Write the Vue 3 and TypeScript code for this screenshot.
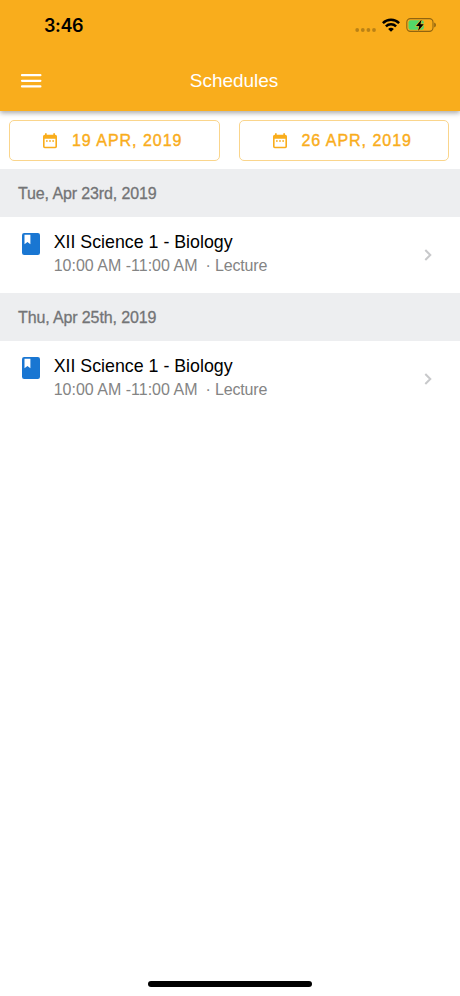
<script setup lang="ts">
interface Lecture {
  day: string
  title: string
  time: string
  kind: string
}

const range: string[] = ['19 APR, 2019', '26 APR, 2019']
const lectures: Lecture[] = [
  { day: 'Tue, Apr 23rd, 2019', title: 'XII Science 1 - Biology', time: '10:00 AM -11:00 AM', kind: 'Lecture' },
  { day: 'Thu, Apr 25th, 2019', title: 'XII Science 1 - Biology', time: '10:00 AM -11:00 AM', kind: 'Lecture' },
]
</script>

<template>
  <div class="screen">
    <header class="header">
      <div class="status">
        <span class="clock">3:46</span>
        <div class="indicators">
          <svg class="signal" width="22" height="4" viewBox="0 0 22 4">
            <circle v-for="n in 4" :key="n" :cx="n * 5.6 - 3.4" cy="2" r="1.9" fill="#000" fill-opacity=".25" />
          </svg>
          <svg class="wifi" width="18" height="14" viewBox="0 0 18 14">
            <g fill="none" stroke="#000" stroke-width="2.5">
              <path d="M.9 5.1a11.6 11.6 0 0 1 16.2 0" />
              <path d="M3.9 8.3a7.3 7.3 0 0 1 10.2 0" />
            </g>
            <path d="M6.1 11a4.3 4.3 0 0 1 5.8 0L9 13.8z" />
          </svg>
          <svg class="battery" width="31" height="16" viewBox="0 0 31 16">
            <rect x=".8" y="1.6" width="26.2" height="12.8" rx="3.6" fill="none" stroke="#000" stroke-opacity=".42" stroke-width="1.1" />
            <rect x="2.5" y="3.3" width="15.3" height="9.4" rx="2" fill="#52d769" />
            <path d="M28.2 5.5q1.8.8 1.8 2.5t-1.8 2.5z" fill-opacity=".42" />
            <path d="M15.6 2.4 10 8.9h3.3l-1.2 5 5.6-6.7h-3.3z" stroke="#f9ad1c" stroke-width="1.2" paint-order="stroke" />
          </svg>
        </div>
      </div>
      <div class="toolbar">
        <svg class="menu" width="22" height="16" viewBox="0 0 22 16">
          <path d="M2 2.2h18.4M2 7.8h18.4M2 13.4h18.4" stroke="#fff" stroke-width="2.2" stroke-linecap="round" />
        </svg>
        <h1 class="heading">Schedules</h1>
      </div>
    </header>

    <div class="range">
      <button v-for="date in range" :key="date" class="date" type="button">
        <svg class="calendar" width="14" height="16" viewBox="0 0 14 16">
          <path
            fill="#f9ad1c"
            fill-rule="evenodd"
            d="M2 .3h1.7v1.5h6.6V.3H12v1.5h.3A1.7 1.7 0 0 1 14 3.5v10.1a1.7 1.7 0 0 1-1.7 1.7H1.7A1.7 1.7 0 0 1 0 13.6V3.5A1.7 1.7 0 0 1 1.7 1.8H2zM1.6 5.7v7.5q0 .6.6.6h9.6q.6 0 .6-.6V5.7z"
          />
          <path d="M3 8h1.7M6.15 8h1.7M9.3 8H11" stroke="#f9ad1c" stroke-width="1.4" />
        </svg>
        <span>{{ date }}</span>
      </button>
    </div>

    <section v-for="item in lectures" :key="item.day">
      <h2 class="day">{{ item.day }}</h2>
      <div class="item">
        <svg class="book" width="18" height="22" viewBox="0 0 18 22">
          <rect width="18" height="22" rx="2.2" fill="#1976d2" />
          <path d="M2.5 1.8h5.9v9.4L5.45 9 2.5 11.2z" fill="#fff" />
        </svg>
        <div class="details">
          <div class="title">{{ item.title }}</div>
          <div class="meta"><span>{{ item.time }}</span><span class="kind">· {{ item.kind }}</span></div>
        </div>
        <svg class="chevron" width="8" height="12" viewBox="0 0 8 12">
          <path d="m1.3 1 5 5-5 5" fill="none" stroke="#c8c9cb" stroke-width="2" />
        </svg>
      </div>
    </section>
    <div class="home"></div>
  </div>
</template>

<style>
body {
  margin: 0;
  background: #fff;
}
</style>

<style scoped>
.screen {
  box-sizing: border-box;
  display: flex;
  flex-direction: column;
  width: 460px;
  height: 996px;
  overflow: hidden;
  background: #fff;
  font-family: 'Liberation Sans', Arial, sans-serif;
}
.header {
  height: 111px;
  flex: none;
  background: #f9ad1c;
  box-shadow: 0 2px 5px rgba(0, 0, 0, 0.35);
}
.status {
  display: flex;
  justify-content: space-between;
  align-items: center;
  height: 50px;
  padding: 0 23px 0 44px;
}
.clock {
  font: 600 18px/22px Inter, sans-serif;
  letter-spacing: -0.4px;
  padding-top: 2px;
}
.indicators {
  display: flex;
  align-items: center;
}
.signal {
  margin: 9px 5px 0 0;
}
.wifi {
  margin-right: 6px;
}
.toolbar {
  display: grid;
  grid-template-columns: 64px 1fr 56px;
  align-items: center;
  height: 61px;
}
.menu {
  margin-left: 20px;
}
.heading {
  margin: 0;
  color: #fff;
  text-align: center;
  font-size: 19px;
  font-weight: 400;
  line-height: 24px;
  letter-spacing: -0.05px;
}
.range {
  display: flex;
  gap: 19px;
  flex: none;
  height: 58px;
  box-sizing: border-box;
  padding: 9px 11px 8px 9px;
}
.date {
  flex: 1;
  display: flex;
  align-items: center;
  justify-content: flex-start;
  gap: 15px;
  padding: 0 0 0 33px;
  border: 1px solid #fad58c;
  border-radius: 5px;
  background: #fff;
  color: #f9ad1c;
  font-family: inherit;
  font-size: 16px;
  letter-spacing: 0.97px;
  -webkit-text-stroke: 0.4px #f9ad1c;
}
.day {
  margin: 0;
  height: 48px;
  padding-left: 18px;
  background: #edeef0;
  color: #737476;
  font-size: 16px;
  font-weight: 400;
  line-height: 50px;
  letter-spacing: -0.12px;
  -webkit-text-stroke: 0.3px #737476;
}
.item {
  box-sizing: border-box;
  display: flex;
  height: 75.8px;
  padding: 14px 28px 0 22px;
}
.book {
  margin: 2px 13.7px 0 0;
}
.details {
  flex: 1;
}
.title {
  color: #000;
  font-size: 17.8px;
  line-height: 22px;
}
.meta {
  display: flex;
  gap: 8px;
  margin-top: 3px;
  color: #848484;
  font-size: 16px;
  line-height: 20px;
}
.kind {
  letter-spacing: -0.15px;
}
.chevron {
  margin-top: 18px;
}
.home {
  width: 164px;
  height: 6px;
  margin: auto auto 9px;
  border-radius: 3px;
  background: #000;
}
</style>
